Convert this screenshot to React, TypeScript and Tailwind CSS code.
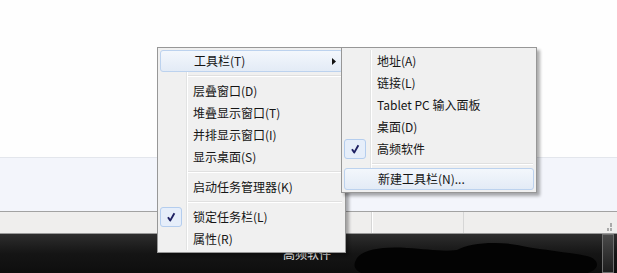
import React from "react";

type Item =
  | { kind: "item"; label: string; checked?: boolean; sub?: boolean; active?: boolean }
  | { kind: "sep" };

const mainItems: Item[] = [
  { kind: "item", label: "工具栏(T)", sub: true, active: true },
  { kind: "sep" },
  { kind: "item", label: "层叠窗口(D)" },
  { kind: "item", label: "堆叠显示窗口(T)" },
  { kind: "item", label: "并排显示窗口(I)" },
  { kind: "item", label: "显示桌面(S)" },
  { kind: "sep" },
  { kind: "item", label: "启动任务管理器(K)" },
  { kind: "sep" },
  { kind: "item", label: "锁定任务栏(L)", checked: true },
  { kind: "item", label: "属性(R)" },
];

const subItems: Item[] = [
  { kind: "item", label: "地址(A)" },
  { kind: "item", label: "链接(L)" },
  { kind: "item", label: "Tablet PC 输入面板" },
  { kind: "item", label: "桌面(D)" },
  { kind: "item", label: "高频软件", checked: true },
  { kind: "sep" },
  { kind: "item", label: "新建工具栏(N)...", active: true },
];

function Check() {
  return (
    <div className="absolute left-0 top-[1px] flex h-[20px] w-[22px] items-center justify-center rounded-[3px] border border-[#b4cdee] bg-[#e6eefa]">
      <svg width="12" height="12" viewBox="0 0 12 12">
        <path d="M3 6.2 L5.2 9.6 L9.4 2.2" fill="none" stroke="#1f2163" strokeWidth="1.9" strokeLinejoin="round" />
      </svg>
    </div>
  );
}

function Menu({ items, className }: { items: Item[]; className: string }) {
  return (
    <div
      className={`absolute border border-[#979797] bg-[#f0f0f0] p-[2px] shadow-[3px_3px_3px_rgba(0,0,0,0.32)] ${className}`}
    >
      {/* gutter line */}
      <div className="absolute bottom-[2px] left-[28px] top-[2px] w-[2px] border-l border-[#e2e3e3] bg-white" />
      {items.map((it, i) =>
        it.kind === "sep" ? (
          <div key={i} className="relative flex h-[8px] items-center pl-[28px] pr-[1px]">
            <div className="h-[2px] w-full border-t border-[#e0e0e0] bg-white" />
          </div>
        ) : (
          <div
            key={i}
            className={`relative flex h-[22px] items-center pl-[33px] text-[12px] text-[#151515] ${
              it.active
                ? "rounded-[3px] border border-[#bcd2ee] bg-gradient-to-b from-[#f3f7fc] to-[#e3ebf6] pl-[32px]"
                : ""
            }`}
          >
            {it.checked && <Check />}
            <span className="leading-none">{it.label}</span>
            {it.sub && (
              <svg className="absolute right-[6px] top-[7px]" width="4" height="7" viewBox="0 0 4 7">
                <path d="M0 0 L4 3.5 L0 7 Z" fill="#111" />
              </svg>
            )}
          </div>
        )
      )}
    </div>
  );
}

export default function App() {
  return (
    <div className="relative h-[273px] w-[617px] overflow-hidden bg-white font-['Noto_Sans_CJK_SC','Noto_Sans',sans-serif]">
      <div className="h-[158px] border-b border-[#e3e6ec] bg-[#fefefe]" />
      <div className="h-[53px] bg-[#f3f5fb]" />
      <div className="flex h-[22px] border-t border-[#a2a2a2] bg-[#efeeed]">
        <div className="w-[372px] border-r border-[#d6d6d6]" />
        <div className="w-[92px] border-r border-[#d6d6d6] border-l border-l-white" />
        <div className="flex-1" />
        <div className="mr-[5px] mt-[11px] grid h-[8px] w-[8px] grid-cols-3 gap-[1px]">
          <span />
          <span />
          <span className="bg-[#a9a9a9]" />
          <span />
          <span className="bg-[#a9a9a9]" />
          <span className="bg-[#a9a9a9]" />
        </div>
      </div>
      <div className="relative flex h-[40px] items-center border-t border-[#9a9a9a] bg-gradient-to-b from-[#2e2e2e] via-[#151515] to-[#0e0e0e]">
        <span className="ml-[283px] text-[12px] leading-none text-[#ececec]">高频软件</span>
        <svg className="absolute left-[352px] top-[4px]" width="250" height="40" viewBox="0 0 250 40">
          <path
            d="M4 22 C8 12 30 8 55 10 C75 11 90 14 105 12 C118 4 150 3 170 8 C190 12 215 14 235 18 C250 22 248 34 230 36 C200 40 150 40 110 38 C70 38 30 40 12 36 C2 33 1 27 4 22 Z"
            fill="#030303"
          />
        </svg>
        <div className="ml-auto mr-[3px] h-full w-[12px] border border-[#6f6f6f] bg-gradient-to-b from-[#4a4a4a] to-[#1e1e1e]" />
      </div>

      <Menu items={mainItems} className="left-[157px] top-[47px] w-[189px]" />
      <Menu items={subItems} className="left-[341px] top-[47px] w-[196px]" />
    </div>
  );
}
